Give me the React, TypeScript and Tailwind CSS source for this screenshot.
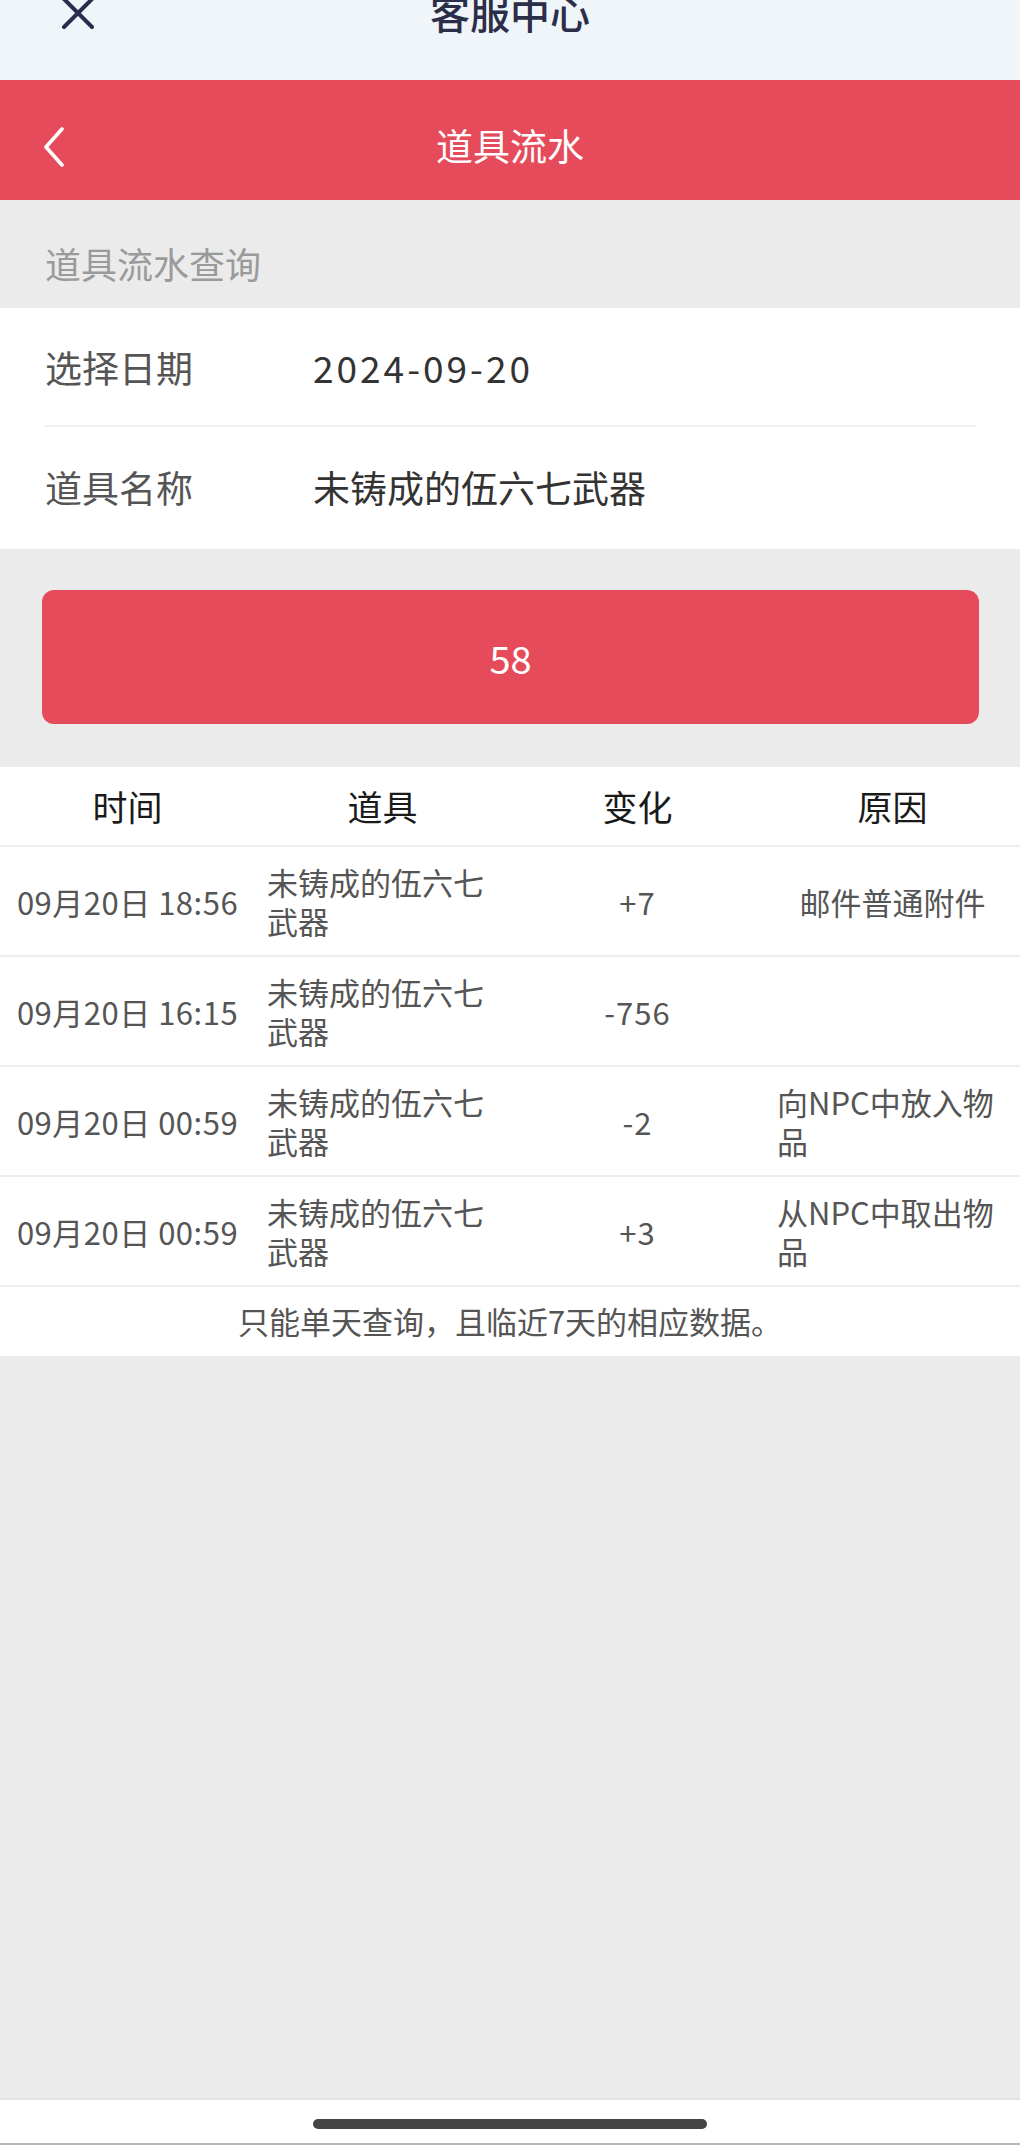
import React from "react";

const rows = [
  { time: "09月20日 18:56", item: "未铸成的伍六七武器", change: "+7", reason: "邮件普通附件" },
  { time: "09月20日 16:15", item: "未铸成的伍六七武器", change: "-756", reason: "" },
  { time: "09月20日 00:59", item: "未铸成的伍六七武器", change: "-2", reason: "向NPC中放入物品" },
  { time: "09月20日 00:59", item: "未铸成的伍六七武器", change: "+3", reason: "从NPC中取出物品" },
];

export default function App() {
  return (
    <div
      className="w-[1020px] h-[2145px] bg-[#ebebeb] flex flex-col overflow-hidden"
      style={{ fontFamily: '"Noto Sans CJK SC", "Noto Sans", sans-serif' }}
    >
      {/* top system bar */}
      <div className="h-[80px] shrink-0 bg-[#eff5f8] grid grid-cols-[1fr_auto_1fr] items-start overflow-hidden">
        <div className="pl-[61px] -mt-[4px]">
          <svg width="34" height="34" viewBox="0 0 34 34" fill="none">
            <path d="M3 3 L31 31 M31 3 L3 31" stroke="#2a2d4f" strokeWidth="4" strokeLinecap="round" />
          </svg>
        </div>
        <div className="text-[40px] leading-[40px] -mt-[8px] font-medium text-[#2b2e48]">客服中心</div>
        <div />
      </div>

      {/* red header */}
      <div className="h-[120px] shrink-0 bg-[#e64b5b] grid grid-cols-[1fr_auto_1fr] items-center pt-[10px]">
        <div className="pl-[43px] flex items-center pt-[3px]">
          <svg width="22" height="40" viewBox="0 0 22 40" fill="none">
            <path d="M19 2 L3 20 L19 38" stroke="#ffffff" strokeWidth="3.6" strokeLinecap="round" strokeLinejoin="round" />
          </svg>
        </div>
        <div className="text-[37px] leading-[44px] text-white">道具流水</div>
        <div />
      </div>

      {/* section title */}
      <div className="h-[108px] shrink-0 flex items-center pl-[45px] pt-[18px] text-[36px] text-[#9a9a9a]">
        道具流水查询
      </div>

      {/* form */}
      <div className="shrink-0 bg-white">
        <div className="h-[119px] mx-[44px] border-b-2 border-[#f0f0f0] flex items-center pl-[1px] pt-[2px]">
          <div className="w-[268px] text-[37px] text-[#555555]">选择日期</div>
          <div className="text-[37px] text-[#333333] tracking-[3px]">2024-09-20</div>
        </div>
        <div className="h-[122px] flex items-center pl-[45px]">
          <div className="w-[268px] text-[37px] text-[#555555]">道具名称</div>
          <div className="text-[37px] text-[#333333]">未铸成的伍六七武器</div>
        </div>
      </div>

      {/* button area */}
      <div className="h-[218px] shrink-0 px-[42px] pt-[41px]">
        <div className="h-[134px] w-[937px] rounded-[12px] bg-[#e64b5b] flex items-center justify-center text-white text-[38px]">
          58
        </div>
      </div>

      {/* table */}
      <div className="shrink-0 bg-white">
        <div className="h-[80px] grid grid-cols-4 items-center border-b-2 border-[#eeeeee] text-[35px] text-[#1a1a1a] text-center">
          <div>时间</div>
          <div>道具</div>
          <div>变化</div>
          <div>原因</div>
        </div>
        {rows.map((r, i) => (
          <div
            key={i}
            className="h-[110px] grid grid-cols-4 items-center border-b-2 border-[#eeeeee] text-[31px] leading-[39px] text-[#555555]"
          >
            <div className="text-center tracking-[0.5px]">{r.time}</div>
            <div className="px-[12px] text-left">{r.item}</div>
            <div className="text-center tracking-[1px]">{r.change}</div>
            <div className="px-[12px] flex justify-center">
              <div className="text-left">{r.reason}</div>
            </div>
          </div>
        ))}
        <div className="h-[69px] flex items-center justify-center text-[31px] text-[#555555]">
          只能单天查询，且临近7天的相应数据。
        </div>
      </div>

      <div className="flex-1" />

      {/* bottom home indicator */}
      <div className="h-[47px] shrink-0 bg-white border-t-2 border-[#e2e2e2] flex flex-col">
        <div className="flex-1 flex items-center justify-center pt-[4px]">
          <div className="w-[394px] h-[10px] rounded-full bg-[#454545]" />
        </div>
        <div className="h-[2px] bg-[#b8b8b8]" />
      </div>
    </div>
  );
}
